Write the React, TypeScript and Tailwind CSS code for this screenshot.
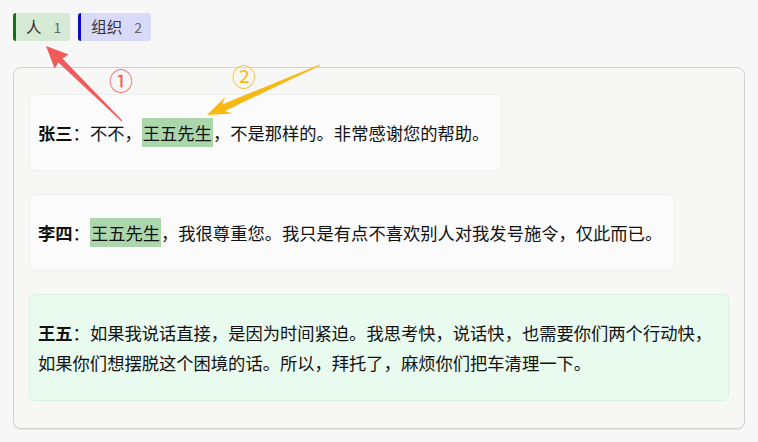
import React from 'react';

type Line = {
  speaker: string;
  parts: { text: string; mark?: boolean }[];
  tone?: 'plain' | 'green';
  full?: boolean;
};

const lines: Line[] = [
  {
    speaker: '张三',
    parts: [
      { text: '不不，' },
      { text: '王五先生', mark: true },
      { text: '，不是那样的。非常感谢您的帮助。' },
    ],
  },
  {
    speaker: '李四',
    parts: [
      { text: '王五先生', mark: true },
      { text: '，我很尊重您。我只是有点不喜欢别人对我发号施令，仅此而已。' },
    ],
  },
  {
    speaker: '王五',
    tone: 'green',
    full: true,
    parts: [
      {
        text: '如果我说话直接，是因为时间紧迫。我思考快，说话快，也需要你们两个行动快，如果你们想摆脱这个困境的话。所以，拜托了，麻烦你们把车清理一下。',
      },
    ],
  },
];

const Tab: React.FC<{ label: string; count: number; bar: string; bg: string }> = ({ label, count, bar, bg }) => (
  <div className={`flex h-[28px] items-center gap-[12px] rounded-[3px] border-l-[3px] pl-[10px] pr-[9px] ${bar} ${bg}`}>
    <span className="text-[15.5px] text-[#333]">{label}</span>
    <span className="text-[14px] text-[#666]">{count}</span>
  </div>
);

// annotation arrows drawn over the page
const Annotations = () => (
  <>
    <svg className="pointer-events-none absolute left-0 top-0" width={758} height={442} viewBox="0 0 758 442">
      <polygon
        fill="#f35a5a"
        points="46,46 68.6,54.4 62.5,58.5 122.4,120.6 121.6,121.4 58.4,62.6 54.6,68.6"
      />
      <polygon
        fill="#f8b813"
        points="207,115 225.3,97.1 222.1,104.5 319.8,64.5 320.2,65.5 224.9,110.9 232.5,113.5"
      />
    </svg>
    <span className="pointer-events-none absolute left-[109px] top-[66px] text-[24px] leading-[28px] text-[#f25c5c]">①</span>
    <span className="pointer-events-none absolute left-[232px] top-[62px] text-[24px] leading-[28px] text-[#f7bb1e]">②</span>
  </>
);

export default function App() {
  return (
    <div
      className="relative min-h-[442px] w-full bg-[#f7f7f7] p-[13px] text-[#111]"
      style={{ fontFamily: '"Noto Sans CJK SC", "Noto Sans", sans-serif' }}
    >
      <div className="flex gap-2">
        <Tab label="人" count={1} bar="border-[#0b780f]" bg="bg-[#d5e9d4]" />
        <Tab label="组织" count={2} bar="border-[#0a0ac8]" bg="bg-[#d9d9f8]" />
      </div>

      <div className="mt-[26px] flex flex-col items-start gap-[23px] rounded-lg border border-[#d2d2d2] bg-[#f7f7f6] px-[15px] pb-[27px] pt-[26px] shadow-[0_1px_1px_rgba(0,0,0,0.08)]">
        {lines.map((line) => (
          <div
            key={line.speaker}
            className={`rounded-md border py-[22.5px] pl-2 text-[17.3px] leading-[30px] ${
              line.tone === 'green' ? 'border-[#d9f2e1] bg-[#e9faef] pr-2' : 'border-[#eeeeee] bg-[#fbfbfb] pr-3'
            } ${line.full ? 'self-stretch' : ''}`}
          >
            <span className="font-bold">{line.speaker}</span>：
            {line.parts.map((p, i) =>
              p.mark ? (
                <span key={i} className="bg-[#acd6ac] px-[1px] py-[2px]">
                  {p.text}
                </span>
              ) : (
                <span key={i}>{p.text}</span>
              )
            )}
          </div>
        ))}
      </div>

      <Annotations />
    </div>
  );
}
